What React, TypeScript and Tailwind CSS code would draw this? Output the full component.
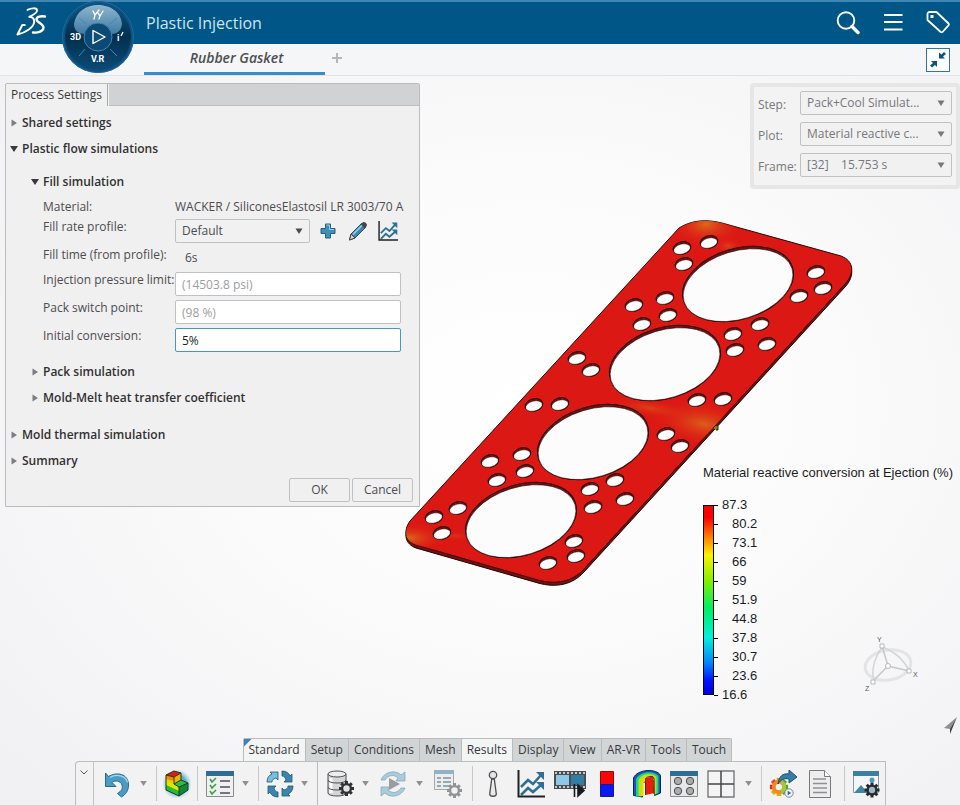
import type { ReactNode } from 'react';
import clsx from 'clsx';

const BIG_HOLES = [
  [738, 284],
  [665, 363],
  [593, 442],
  [521, 520],
];

const BOLT_HOLES = [
  [682, 248], [709, 242], [684, 264], [665, 298], [634, 305], [668, 315],
  [642, 324], [816, 272], [823, 288], [799, 296], [733, 334], [760, 324],
  [735, 350], [767, 344], [697, 400], [723, 399], [666, 434], [680, 446],
  [577, 358], [591, 370], [534, 405], [560, 404], [490, 461], [522, 454],
  [497, 480], [525, 471], [434, 517], [458, 508], [442, 533], [590, 489],
  [615, 480], [593, 507], [625, 499], [574, 541], [576, 556], [548, 563],
];

const OUTLINE =
  'M410 521 C403 531 405 541 416 545 L538 580 C556 585 572 582 584 569 L845 284 C855 273 854 261 841 256 L722 223 C706 219 692 220 679 228 Z';

const LEGEND = ['87.3', '80.2', '73.1', '66', '59', '51.9', '44.8', '37.8', '30.7', '23.6', '16.6'];

const TABS = ['Standard', 'Setup', 'Conditions', 'Mesh', 'Results', 'Display', 'View', 'AR-VR', 'Tools', 'Touch'];

function Gasket() {
  return (
    <svg viewBox="400 215 460 375" className="absolute left-[400px] top-[139px] h-[375px] w-[460px]">
      <defs>
        <radialGradient id="hotTop">
          <stop offset="0" stopColor="#dc6a1c" />
          <stop offset="1" stopColor="#dc1814" stopOpacity="0" />
        </radialGradient>
        <clipPath id="face">
          <path d={OUTLINE} />
        </clipPath>
      </defs>
      <path d={OUTLINE} transform="translate(0 3)" fill="#7a100d" stroke="#1a0404" />
      <path d={OUTLINE} fill="#dc1814" stroke="#2a0505" />
      <g clipPath="url(#face)">
        <ellipse cx="706" cy="224" rx="38" ry="24" fill="url(#hotTop)" />
        <ellipse cx="728" cy="246" rx="14" ry="9" fill="url(#hotTop)" opacity="0.5" />
        <ellipse cx="408" cy="538" rx="38" ry="15" fill="url(#hotTop)" />
        <ellipse cx="455" cy="536" rx="24" ry="5" fill="url(#hotTop)" opacity="0.3" />
        <ellipse cx="704" cy="424" rx="56" ry="24" fill="url(#hotTop)" opacity="0.85" transform="rotate(10 704 424)" />
        <ellipse cx="650" cy="408" rx="45" ry="10" fill="url(#hotTop)" opacity="0.5" transform="rotate(10 650 408)" />
      </g>
      {BIG_HOLES.map(([x, y]) => (
        <g key={x} transform={`translate(${x} ${y}) rotate(-17)`}>
          <ellipse rx="57" ry="35.3" fill="#7a100d" stroke="#200404" />
          <ellipse cx="-0.3" cy="1.1" rx="56.5" ry="34" fill="#fcfcfd" stroke="#200404" strokeWidth="0.6" />
        </g>
      ))}
      {BOLT_HOLES.map(([x, y]) => (
        <g key={`${x}-${y}`} transform={`translate(${x} ${y}) rotate(-15)`}>
          <ellipse rx="9" ry="6.2" fill="#7a100d" stroke="#200404" />
          <ellipse cx="-0.3" cy="1" rx="8.5" ry="4.9" fill="#fff" stroke="#200404" strokeWidth="0.4" />
        </g>
      ))}
      <path d="M713 428l3-3 2 1v4h-2" fill="#8a7a10" stroke="#222" />
    </svg>
  );
}

function Logo() {
  return (
    <svg viewBox="0 0 32 32" className="ml-4 h-8 w-8" fill="none" stroke="#fff" strokeLinecap="round" strokeLinejoin="round">
      <path d="M11.500 2.800C15 1 20.500 .6 21 3c.5 2.200-3 4.600-7.500 6.800" strokeWidth="1.900" />
      <path d="M13.500 9.800c3 .2 5 2 4.700 5.200-.5 5.300-8.200 10.600-16.700 12.500l4.800-9.500h2.500" strokeWidth="2" />
      <path d="M29 9.500c-4-.8-8.500.2-8.500 2.700 0 3 7 4.800 7 8.300 0 3.800-5.500 5.500-10.500 5" strokeWidth="2.400" />
    </svg>
  );
}

function Compass() {
  return (
    <svg viewBox="0 0 76 76" className="absolute left-15 -top-0.5 z-10 h-[76px] w-[76px]">
      <defs>
        <linearGradient id="disc" x1="0" y1="0" x2="0" y2="1">
          <stop offset="0" stopColor="#12527f" />
          <stop offset="0.5" stopColor="#03304e" />
          <stop offset="1" stopColor="#0b4a76" />
        </linearGradient>
        <linearGradient id="gloss" x1="0" y1="0" x2="0" y2="1">
          <stop offset="0" stopColor="#8fb6cf" />
          <stop offset="1" stopColor="#3f7ba1" />
        </linearGradient>
      </defs>
      <circle cx="38" cy="37" r="36" fill="#0a5283" />
      <circle cx="38" cy="37" r="35.500" fill="none" stroke="#24699a" />
      <circle cx="38" cy="37" r="33" fill="url(#disc)" />
      <path d="M14 24C16 11 27 5 38 5s23 6 24 19c-1 8-6 10-11 10A14 14 0 0 0 25 34c-6 0-11-3-11-10z" fill="url(#gloss)" />
      <g stroke="#3f88b5">
        <path d="M19 18l7 6M57 18l-7 6M19 56l6-7M57 56l-7-7" />
        <circle cx="38" cy="37" r="14" fill="#0b4a75" />
      </g>
      <path d="M33 30.500v13L45 37z" fill="#0d4f7d" stroke="#fff" strokeWidth="1.400" strokeLinejoin="round" />
      <g stroke="#fff" strokeWidth="1.300" fill="none" strokeLinecap="round">
        <path d="M33 11l2 4 4-5M35 15l-1 4M38 13l2 3 3-5M40 16l-1 3" />
      </g>
      <g fill="#fff" className="font-['Roboto',sans-serif] text-[9px] font-bold">
        <text x="10" y="40">3D</text>
        <text x="57" y="41">i</text>
        <text x="31" y="62">V.R</text>
      </g>
      <path d="M61 36l2-4" stroke="#fff" strokeWidth="1.200" />
    </svg>
  );
}

function Header() {
  return (
    <header className="relative flex h-11 items-center border-t-2 border-[#3f86b4] bg-[#005686]">
      <Logo />
      <Compass />
      <h1 className="ml-[98px] flex-1 text-base leading-5 text-[#cfe3ef]">Plastic Injection</h1>
      <div className="flex items-center gap-[21px] pr-2.5">
        <button aria-label="Search">
          <svg viewBox="0 0 24 24" className="h-6 w-6" fill="none" stroke="#fff">
            <circle cx="10" cy="9.500" r="8.300" strokeWidth="1.900" />
            <path d="M16 15.500l6 6" strokeWidth="3.400" strokeLinecap="round" />
          </svg>
        </button>
        <button aria-label="Menu">
          <svg viewBox="0 0 24 24" className="h-6 w-6" stroke="#fff" strokeWidth="2">
            <path d="M3 4h18.500M3 11h18.500M3 18.500h18.500" />
          </svg>
        </button>
        <button aria-label="Tags">
          <svg viewBox="0 0 24 24" className="h-6 w-6" fill="none" stroke="#fff" strokeWidth="1.800" strokeLinejoin="round">
            <path d="M1.500 3a2 2 0 0 1 2-2h7L22.500 12.500a1.200 1.200 0 0 1 0 1.800L16.500 21a1.200 1.200 0 0 1-1.800 0L1.500 9z" />
            <path d="M4.500 4h3v3h-3z" fill="#fff" stroke="none" />
          </svg>
        </button>
      </div>
    </header>
  );
}

function TabBar() {
  return (
    <nav className="flex h-8 items-stretch border-b border-[#dde4ea] bg-[#f5f6f8] pl-36">
      <button className="w-[181px] border-b-3 border-[#3d8bc2] pl-1 text-sm font-semibold italic text-[#4e4e50]">Rubber Gasket</button>
      <button aria-label="New tab" className="ml-1.5 mr-auto flex items-center pb-1">
        <svg viewBox="0 0 12 12" className="h-3 w-3" stroke="#b4b6b9" strokeWidth="2">
          <path d="M6 1v10M1 6h10" />
        </svg>
      </button>
      <button aria-label="Collapse" className="mr-2.5 mt-1 h-6 w-6 border border-[#2f75a3] bg-white">
        <svg viewBox="0 0 22 22" className="h-full w-full" fill="#0b5585">
          <path d="M12 3.500v6h6l-2-2 3-2.500-2-2-2.500 2.500z" />
          <path d="M10 18v-6H4l2 2-3 2.500 2 2 3-2.500z" />
        </svg>
      </button>
    </nav>
  );
}

function Section({ label, open }: { label: string; open?: boolean }) {
  return (
    <button className="flex h-[26px] items-center gap-1 text-xs font-semibold text-[#303032]" aria-expanded={!!open}>
      <svg viewBox="0 0 8 8" className="h-2 w-2">
        {open ? <path d="M0 1h8L4 7z" fill="#3a3a3c" /> : <path d="M1.500 0.500v7L7 4z" fill="#7b7d80" />}
      </svg>
      {label}
    </button>
  );
}

function Field({ id, label, children }: { id: string; label: string; children: ReactNode }) {
  return (
    <>
      <label htmlFor={id} className="whitespace-nowrap leading-4">{label}</label>
      {children}
    </>
  );
}

interface PickerProps {
  id: string;
  value: string;
  className: string;
}

function Picker({ id, value, className }: PickerProps) {
  return (
    <div className={clsx('relative', className)}>
      <select id={id} className="h-6 w-full appearance-none rounded-xs border border-[#c0c1c4] bg-[#f1f1f2] px-1.5">
        <option>{value}</option>
      </select>
      <svg viewBox="0 0 8 6" className="pointer-events-none absolute right-[7px] top-[9px] h-1.5 w-2" fill="currentColor">
        <path d="M0.500 0.500h7L4 6z" />
      </svg>
    </div>
  );
}

function ProcessSettings() {
  const input = 'h-6 w-[226px] rounded-xs border bg-white px-1.5';
  return (
    <section className="w-[415px] rounded-t-xs border border-[#b9bbbe] bg-[#f0f0f0] text-xs text-[#4c4c4e]">
      <div className="flex h-[22px]">
        <div className="border-r border-[#a9abae] px-[5px] leading-[22px] text-[#3a3a3c]">Process Settings</div>
        <div className="ml-px flex-1 border-b border-[#bcbec0] bg-[#d1d2d4]" />
      </div>
      <div className="flex flex-col items-start py-1 pl-1">
        <Section label="Shared settings" />
        <Section label="Plastic flow simulations" open />
        <div className="mt-[7px] flex flex-col items-start pl-[21px]">
          <Section label="Fill simulation" open />
          <div className="mt-1 grid grid-cols-[132px_auto] gap-y-1 pl-3">
            <span className="leading-4">Material:</span>
            <span className="whitespace-nowrap leading-4">WACKER / SiliconesElastosil LR 3003/70 A</span>
            <Field id="profile" label="Fill rate profile:">
              <div className="flex items-center">
                <Picker id="profile" value="Default" className="w-[135px]" />
                <button aria-label="Add profile" className="ml-2">
                  <svg viewBox="0 0 20 20" className="h-5 w-5">
                    <path d="M7.500 3h5v4.500H17v5h-4.500V17h-5v-4.500H3v-5h4.500z" fill="#3f8fb9" stroke="#2a5d7c" />
                    <path d="M8.500 4h3v4.500H16" fill="none" stroke="#8fd0ec" />
                  </svg>
                </button>
                <button aria-label="Edit profile" className="ml-2.5">
                  <svg viewBox="0 0 20 20" className="h-5 w-5">
                    <path d="M1.500 19l1.500-6L14 2l4 4L7 17z" fill="#3e86ad" stroke="#28526b" />
                    <path d="M1.500 19l1.500-6 4 4z" fill="#d8d4cc" stroke="#444" />
                    <path d="M12.500 3.500L15 1.300c1.500-1 5 2 3.700 3.700L16.500 7.500z" fill="#45484b" />
                    <path d="M5 13.500l9-9" stroke="#9fd4ea" strokeWidth="1.500" />
                  </svg>
                </button>
                <button aria-label="Plot profile" className="ml-2.5">
                  <ChartIcon className="h-5 w-5" />
                </button>
              </div>
            </Field>
            <span className="whitespace-nowrap leading-4">Fill time (from profile):</span>
            <span className="pl-2.5 leading-[21px]">6s</span>
            <Field id="pressure" label="Injection pressure limit:">
              <input id="pressure" placeholder="(14503.8 psi)" className={clsx(input, 'border-[#c0c1c4] placeholder:text-[#9c9da0]')} />
            </Field>
            <Field id="switch" label="Pack switch point:">
              <input id="switch" placeholder="(98 %)" className={clsx(input, 'border-[#c0c1c4] placeholder:text-[#9c9da0]')} />
            </Field>
            <Field id="conversion" label="Initial conversion:">
              <input id="conversion" defaultValue="5%" className={clsx(input, 'border-[#4796c4] text-[#1f1f20]')} />
            </Field>
          </div>
          <div className="mt-[7px] flex flex-col items-start">
            <Section label="Pack simulation" />
            <Section label="Mold-Melt heat transfer coefficient" />
          </div>
        </div>
        <div className="mt-[11px] flex flex-col items-start">
          <Section label="Mold thermal simulation" />
          <Section label="Summary" />
        </div>
        <div className="mt-1 flex gap-0.5 self-end pr-1.5">
          <button className="h-6 w-[61px] rounded-xs border border-[#c0c1c4]">OK</button>
          <button className="h-6 w-[61px] rounded-xs border border-[#c0c1c4]">Cancel</button>
        </div>
      </div>
    </section>
  );
}

function PlotSelector() {
  return (
    <section className="grid w-[210px] grid-cols-[42px_1fr] items-center gap-y-[7px] self-end rounded-sm border-4 border-[#e6e6e7] bg-[#f3f3f4] px-1 pb-2 pt-1 text-xs text-[#77787b]">
      <label htmlFor="step" className="pt-1">Step:</label>
      <Picker id="step" value="Pack+Cool Simulat..." className="w-full" />
      <label htmlFor="plot" className="pt-1">Plot:</label>
      <Picker id="plot" value="Material reactive c..." className="w-full" />
      <label htmlFor="frame" className="pt-1">Frame:</label>
      <Picker id="frame" value={'[32]\u00a0\u00a0\u00a0\u00a015.753 s'} className="w-full" />
    </section>
  );
}

function Legend() {
  return (
    <section className="font-['Liberation_Sans',sans-serif] text-[13px] text-[#1c1c1e]">
      <h2 className="whitespace-nowrap leading-4">Material reactive conversion at Ejection (%)</h2>
      <div className="mt-4 flex">
        <div className="my-2 w-[11px] border border-black bg-[linear-gradient(to_bottom,#f00_0%,#f00_6%,#ff9000_18%,#fff000_26%,#80f000_40%,#00f060_54%,#00f0e0_70%,#0080ff_84%,#0010ff_93%,#0000e0_100%)]" />
        <ol className="flex flex-col gap-[3px]">
          {LEGEND.map((value, i) => (
            <li key={value} className="flex h-4 items-center leading-4">
              <span className="h-px w-1 bg-black" />
              <span className={i === 0 || i === LEGEND.length - 1 ? 'pl-1' : 'pl-3.5'}>{value}</span>
            </li>
          ))}
        </ol>
      </div>
    </section>
  );
}

function Triad() {
  return (
    <svg viewBox="0 0 60 60" className="absolute bottom-[112px] right-[41px] h-[60px] w-[60px]">
      <g fill="none" stroke="#e3e4e6" strokeWidth="3">
        <ellipse cx="29" cy="32" rx="23" ry="15" transform="rotate(-10 29 32)" />
        <path d="M23 14C16 24 13 36 14 45M23 14c14 5 22 13 27 24" stroke="#d3d4d7" strokeWidth="1.500" />
      </g>
      <path d="M29 33L23 13M29 33l21 5M29 33L14 48" stroke="#c6c7ca" strokeWidth="1.500" />
      <g fill="#fff" stroke="#b6b7ba">
        <circle cx="29" cy="33" r="2.500" />
        <path d="M21 11h4v4h-4zM48 36h4v4h-4zM12 47h4v4h-4z" />
      </g>
      <g fill="#56585b" className="font-['Liberation_Sans',sans-serif] text-[7px]">
        <text x="18" y="9">Y</text>
        <text x="54" y="44">X</text>
        <text x="6" y="58">Z</text>
      </g>
    </svg>
  );
}

function ChartIcon({ className }: { className?: string }) {
  return (
    <svg viewBox="0 0 28 28" className={className} fill="none">
      <path d="M4 17l7-7 5 4 8-9M4 25l7-7 5 4 8-7" stroke="#2d7093" strokeWidth="2.600" />
      <path d="M19 2h8v8zM19 12h8v8z" fill="#2d7093" />
      <path d="M1.500 0v26.500H28" stroke="#1f2225" strokeWidth="2" />
    </svg>
  );
}

function Icon({ children }: { children: ReactNode }) {
  return <svg viewBox="0 0 28 28" className="h-7 w-7 shrink-0">{children}</svg>;
}

function Gear({ fill, center }: { fill: string; center: string }) {
  return (
    <>
      <g stroke={fill} strokeWidth="3">
        <path d="M0-7.500V7.500M-7.500 0H7.500M-5.300-5.300L5.300 5.300M5.300-5.300L-5.300 5.300" />
      </g>
      <circle r="5.500" fill={fill} />
      <circle r="3.200" fill={center} />
    </>
  );
}

function Tool({ label, className, children }: { label: string; className: string; children: ReactNode }) {
  return (
    <button aria-label={label} className={clsx('flex items-center justify-center', className)}>
      <Icon>{children}</Icon>
    </button>
  );
}

function Caret() {
  return (
    <button aria-label="More" className="flex w-4 items-center justify-center">
      <svg viewBox="0 0 8 6" className="h-[5px] w-[7px]" fill="#8e9093">
        <path d="M0 0h8L4 6z" />
      </svg>
    </button>
  );
}

function Divider() {
  return <span className="mx-1 my-1 w-px bg-[#c6c8ca]" />;
}

function Toolbar() {
  return (
    <footer className="relative mx-auto mt-auto w-fit">
      <div className="ml-[168px] flex h-[23px] w-fit rounded-t-xs border border-b-0 border-[#b9bbbd] text-xs text-[#37383a]">
        {TABS.map((tab, i) => (
          <button
            key={tab}
            className={clsx(
              'relative border-r border-[#b9bbbd] px-[5px] last:border-r-0',
              tab === 'Standard' || tab === 'Results' ? 'bg-[#f3f4f4]' : 'bg-[#d2d5d6]',
            )}
          >
            {i === 0 && <span className="absolute left-0 top-0 h-2 w-2 bg-[#3585bd] [clip-path:polygon(0_0,100%_0,0_100%)]" />}
            {tab}
          </button>
        ))}
      </div>
      <div className="flex h-11 rounded-tl-sm border border-b-0 border-[#bbbdbf] bg-[#f2f2f3]">
        <button aria-label="Collapse toolbar" className="flex w-[18px] justify-center border-r border-[#c3c5c7] pt-2">
          <svg viewBox="0 0 8 5" className="h-[5px] w-2" fill="none" stroke="#55575a">
            <path d="M0.500 0.500L4 4l3.500-3.500" />
          </svg>
        </button>
        <Tool label="Undo" className="w-[42px]">
          <path d="M4.500 3l3 3.500c8-5 20-3 20 8.500 0 6-3 9.500-7 12l-4-3.500c4-2.500 5.500-5 4.500-8.500-1.500-4.500-7-5-10-2.500l4 4H4.500z" fill="#4b9cc4" stroke="#2d6688" />
          <path d="M9 7.500c6-4 16-2 17.500 5" fill="none" stroke="#a3d8ef" strokeWidth="1.200" />
        </Tool>
        <Caret />
        <Divider />
        <Tool label="Results view" className="w-8">
          <defs>
            <radialGradient id="halo">
              <stop offset="0.6" stopColor="#5cacd6" />
              <stop offset="1" stopColor="#9fd0ea" stopOpacity="0" />
            </radialGradient>
          </defs>
          <circle cx="14" cy="14" r="15" fill="url(#halo)" />
          <path d="M3 5l8-4 7 2v7l7 3v7l-9 6-13-6z" fill="#e5d400" />
          <path d="M3 5l8-4 7 2-7 4z" fill="#e51a12" />
          <path d="M3 5l8 2v4l-8-2z" fill="#f08a00" />
          <path d="M11 7l7-4v7l-7 4z" fill="#f2b100" />
          <path d="M11 14l7-4 7 3-9 4z" fill="#28c33c" />
          <path d="M11 14l5 3v4L3 15v-3z" fill="#d9e800" />
          <path d="M3 15l13 6v5L3 20z" fill="#2bb838" />
          <path d="M16 17l9-4v7l-9 6z" fill="#108a3a" />
          <path d="M3 5l8-4 7 2v7l7 3v7l-9 6-13-6zM3 5l8 2 7-4M11 7v7l7-4M11 14l5 3 9-4M16 17v9" fill="none" stroke="#1c3a1c" />
        </Tool>
        <Divider />
        <Tool label="Checklist" className="w-9">
          <path d="M0.500 1.500h27v25h-27z" fill="#f0f0f0" stroke="#8a8c8e" />
          <path d="M0 1h28v5H0z" fill="#2d6f94" />
          <path d="M4 9l2 3 4-4M4 15l2 3 4-4M4 21l2 3 4-4" fill="none" stroke="#35a046" strokeWidth="1.600" />
          <path d="M14 11h10M14 17h10M14 23h10" stroke="#4c4e5c" strokeWidth="1.600" />
        </Tool>
        <Caret />
        <Divider />
        <Tool label="Update" className="w-[34px]">
          <g fill="#3b86ac" stroke="#1f5674" strokeWidth="0.800">
            <path d="M1 12c0-4 2-7 5-8L4 2h8v8l-2-2c-3 1-4 2-4 4z" fill="#79bedd" />
            <path d="M16 1c4 0 7 2 8 5l2-2v8h-8l2-2c-1-3-2-4-4-4z" />
            <path d="M27 16c0 4-2 7-5 8l2 2h-8v-8l2 2c3-1 4-2 4-4z" />
            <path d="M12 27c-4 0-7-2-8-5l-2 2v-8h8l-2 2c1 3 2 4 4 4z" />
          </g>
        </Tool>
        <Caret />
        <span className="mx-1 w-px bg-[#b7b9bb]" />
        <Tool label="Data source" className="w-9">
          <path d="M2 4v19c0 4 18 4 18 0V4" fill="#d5d6d7" stroke="#4c4e50" />
          <path d="M5 8v15" stroke="#fff" strokeWidth="3" />
          <ellipse cx="11" cy="4" rx="9" ry="3" fill="#ededee" stroke="#4c4e50" />
          <path d="M2 10c0 4 18 4 18 0M2 17c0 4 18 4 18 0" fill="none" stroke="#4c4e50" />
          <g transform="translate(20.500 18.500)">
            <Gear fill="#303234" center="#e3e3e4" />
          </g>
        </Tool>
        <Caret />
        <Tool label="Simulate" className="w-[38px]">
          <g fill="#a9cbdb" stroke="#86a8b8" strokeWidth="0.800">
            <path d="M2 10C5 2 16-1 22 5l4-3v9h-9l2-3C15 4 9 5 6 10z" />
            <path d="M26 18c-3 8-14 11-20 5l-4 3v-9h9l-2 3c4 4 10 3 13-2z" />
          </g>
          <path d="M10 8v12l11-6z" fill="#9a9c9e" />
        </Tool>
        <Caret />
        <Tool label="Table options" className="w-10">
          <path d="M0.500 0.500h19v19h-19z" fill="#ededee" stroke="#a3a9ad" />
          <path d="M0 0h20v4H0z" fill="#8fb3c5" />
          <path d="M3 8h4M9 8h8M3 12h4M9 12h8M3 16h4M9 16h8" stroke="#93a9b5" strokeWidth="1.800" />
          <g transform="translate(20.500 20.500)">
            <Gear fill="#919395" center="#f2f2f3" />
          </g>
        </Tool>
        <Divider />
        <Tool label="Probe" className="w-8">
          <circle cx="14" cy="5" r="3.700" fill="#e5e6e7" stroke="#4c4e50" strokeWidth="1.300" />
          <path d="M12.700 9h2.600l2 15c0 3-6.600 3-6.600 0z" fill="#e9e9ea" stroke="#4c4e50" strokeWidth="1.300" />
        </Tool>
        <button aria-label="Charts" className="flex w-11 items-center justify-center">
          <ChartIcon className="h-7 w-7" />
        </button>
        <button aria-label="Animation" className="flex w-[34px] items-center justify-center">
          <svg viewBox="0 0 32 28" className="h-7 w-8">
            <path d="M0 1h32v18H0z" fill="#4b4d4f" />
            <path d="M1 3h30M1 17h30" stroke="#f0f0f0" strokeWidth="1.600" strokeDasharray="2 2" />
            <path d="M2 5h13v10H2z" fill="#8cc9e8" />
            <path d="M17 5h13v10H17z" fill="#317da6" />
            <path d="M20.500 14v13M24 15v11l6-5.500z" fill="#1a1b1c" stroke="#1a1b1c" strokeWidth="1.600" />
          </svg>
        </button>
        <Tool label="Color map" className="w-10">
          <path d="M7.500 1.500h13v13h-13z" fill="#fb0606" stroke="#7e1212" />
          <path d="M7.500 14.500h13v12h-13z" fill="#0718f5" stroke="#141a80" />
        </Tool>
        <Tool label="Section cut" className="w-10">
          <path d="M0.500 8C4-1 24-2 27.500 5.500V23l-6 2.500V12h-12v15l-9-1.500z" fill="#1454c8" stroke="#10265e" />
          <path d="M3 9C7 1 21 0 25.500 6v17l-4 1.500V11h-13v15.500H3z" fill="#1fcf8a" />
          <path d="M5.500 10C8 3 20 2 23.500 7v16.500l-2 1V10h-12v16h-4z" fill="#b5e612" />
          <path d="M8.500 11C10 6 18 4 21.500 8v2l-11 2v14h-2z" fill="#f6d500" />
          <path d="M12 8.500l8-2.500 1.500 17-9 2z" fill="#e3220e" />
          <path d="M12.500 25V9c1.500-3 7-3.500 8.500-1v16" fill="none" stroke="#62240f" />
        </Tool>
        <Tool label="Display groups" className="w-[34px]">
          <path d="M0.500 1.500h27v25h-27z" fill="#e8e8e9" stroke="#8a8c8e" />
          <path d="M0 1h28v5H0z" fill="#2d6f94" />
          <g fill="#a9abad" stroke="#4c4e50">
            <circle cx="8" cy="11" r="3.700" />
            <circle cx="20" cy="11" r="3.700" />
            <circle cx="8" cy="21" r="3.700" />
            <circle cx="20" cy="21" r="3.700" />
          </g>
        </Tool>
        <Tool label="Viewports" className="w-10">
          <path d="M1 1h26v26H1z" fill="#f4f4f4" stroke="#77797b" strokeWidth="1.400" />
          <path d="M14 1v26M1 14h26" stroke="#444648" strokeWidth="1.500" />
        </Tool>
        <Caret />
        <Divider />
        <Tool label="Run results" className="w-[34px]">
          <g transform="translate(10 17) scale(1.300)">
            <path d="M-7 0H0" stroke="#e0281a" strokeWidth="3.500" />
            <path d="M0-7V0" stroke="#f08a10" strokeWidth="3.500" />
            <path d="M-5-5L0 0" stroke="#e8451a" strokeWidth="3.500" />
            <path d="M0 7V0M-5 5L0 0" stroke="#e8a615" strokeWidth="3.500" />
            <path d="M5 5L0 0M7 0H0M5-5L0 0" stroke="#4aa83a" strokeWidth="3.500" />
            <circle r="4" fill="#f2f2f3" stroke="#ee8a20" strokeWidth="3" />
            <path d="M1.500-3.700a4 4 0 0 1 0 7.400" stroke="#a9c832" strokeWidth="3" fill="none" />
          </g>
          <path d="M9 14C10 6 14 3 20 4V0l8 7-8 6V9c-4-1-8 0-11 5z" fill="#347fa8" stroke="#1f4f6b" />
          <circle cx="20" cy="23" r="4.200" fill="#eef3f6" stroke="#7a8c98" />
          <path d="M18.700 20.800v4.400l3.500-2.200z" fill="#2d6f94" />
        </Tool>
        <Tool label="Report" className="w-10">
          <path d="M3.500 0.500h15l6 6v21h-21z" fill="#ededee" stroke="#77797b" />
          <path d="M18.500 0.500v6h6" fill="#fff" stroke="#77797b" />
          <path d="M7 9h13M7 13.500h14M7 18h14M7 22.500h14" stroke="#8e9092" strokeWidth="1.500" />
        </Tool>
        <Divider />
        <Tool label="Image settings" className="mr-0.5 w-[34px]">
          <path d="M1.500 1.500h25v21h-25z" fill="#f4f5f6" stroke="#8a9aa4" />
          <path d="M1 1h26v5H1z" fill="#3a7fa5" />
          <path d="M2 23l7-8 7 8z" fill="#3a86ad" />
          <circle cx="20" cy="10" r="2.500" fill="#4a9cc2" />
          <g transform="translate(20 20)">
            <Gear fill="#27292b" center="#9fb9c8" />
          </g>
        </Tool>
      </div>
    </footer>
  );
}

export default function App() {
  return (
    <div className="flex min-h-screen flex-col overflow-hidden bg-[#f6f6f7] font-['Open_Sans','Noto_Sans',sans-serif]">
      <Header />
      <TabBar />
      <main className="relative flex flex-1 flex-col bg-[radial-gradient(ellipse_at_55%_45%,#ffffff_0%,#fbfbfc_40%,#f0f0f2_100%)]">
        <Gasket />
        <div className="relative flex items-start justify-between pl-[5px] pt-[7px]">
          <ProcessSettings />
          <div className="flex w-[257px] flex-col">
            <PlotSelector />
            <div className="mt-[276px]">
              <Legend />
            </div>
          </div>
        </div>
        <Triad />
        <svg viewBox="0 0 14 18" className="absolute bottom-[70px] right-0.5 h-[18px] w-3.5">
          <path d="M13 0L0 11l6 1z" fill="#8e8f92" />
          <path d="M13 0L6 12v5z" fill="#3b3c3e" />
        </svg>
        <Toolbar />
      </main>
    </div>
  );
}
